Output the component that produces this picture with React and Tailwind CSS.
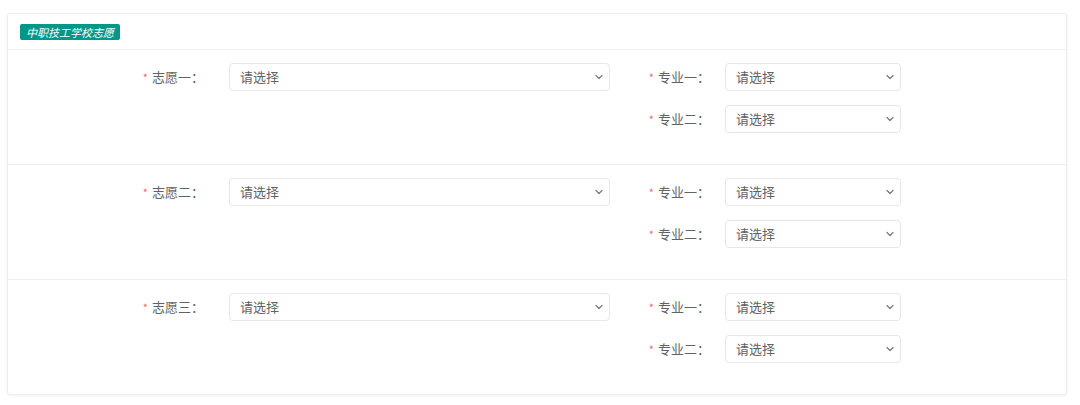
import React from "react";

const rows = ["志愿一", "志愿二", "志愿三"];
const majors = ["专业一", "专业二"];

function Chevron() {
  return (
    <svg width="10" height="10" viewBox="0 0 10 10" fill="none">
      <path d="M2 3.5 L5 6.5 L8 3.5" stroke="#7a7d82" strokeWidth="1.3" strokeLinecap="round" strokeLinejoin="round" />
    </svg>
  );
}

function FakeSelect({ className }) {
  return (
    <div
      className={`h-[28px] flex items-center justify-between pl-[10px] pr-[5px] border border-[#e4e7ed] rounded-[4px] bg-white text-[13px] text-[#606266] ${className}`}
    >
      <span>请选择</span>
      <Chevron />
    </div>
  );
}

function Label({ text, className }) {
  return (
    <div className={`flex items-center justify-end text-[13px] text-[#606266] ${className}`}>
      <span className="text-[#f56c6c] mr-[4px] text-[11px]">*</span>
      <span>{text}：</span>
    </div>
  );
}

export default function App() {
  return (
    <div className="w-[1080px] h-[405px] bg-white pt-[13px] pl-[7px] font-['Noto_Sans_CJK_SC','Noto_Sans',sans-serif]">
      <div className="w-[1060px] border border-[#ebeef5] rounded-[3px] shadow-[0_1px_3px_rgba(0,0,0,0.06)] bg-white">
        <div className="h-[35px] flex items-center pl-[12px]">
          <span className="bg-[#009688] text-white italic text-[11px] leading-[16px] h-[16px] px-[6px] rounded-[2px]">
            中职技工学校志愿
          </span>
        </div>
        {rows.map((r) => (
          <div key={r} className="border-t border-[#ebeef5] flex pt-[13px] pb-[31px]">
            <div className="flex items-center h-[28px]">
              <Label text={r} className="w-[221px] pr-[25px]" />
              <FakeSelect className="w-[381px]" />
            </div>
            <div className="flex flex-col gap-[14px]">
              {majors.map((m) => (
                <div key={m} className="flex items-center h-[28px]">
                  <Label text={m} className="w-[115px] pr-[15px]" />
                  <FakeSelect className="w-[176px]" />
                </div>
              ))}
            </div>
          </div>
        ))}
      </div>
    </div>
  );
}
